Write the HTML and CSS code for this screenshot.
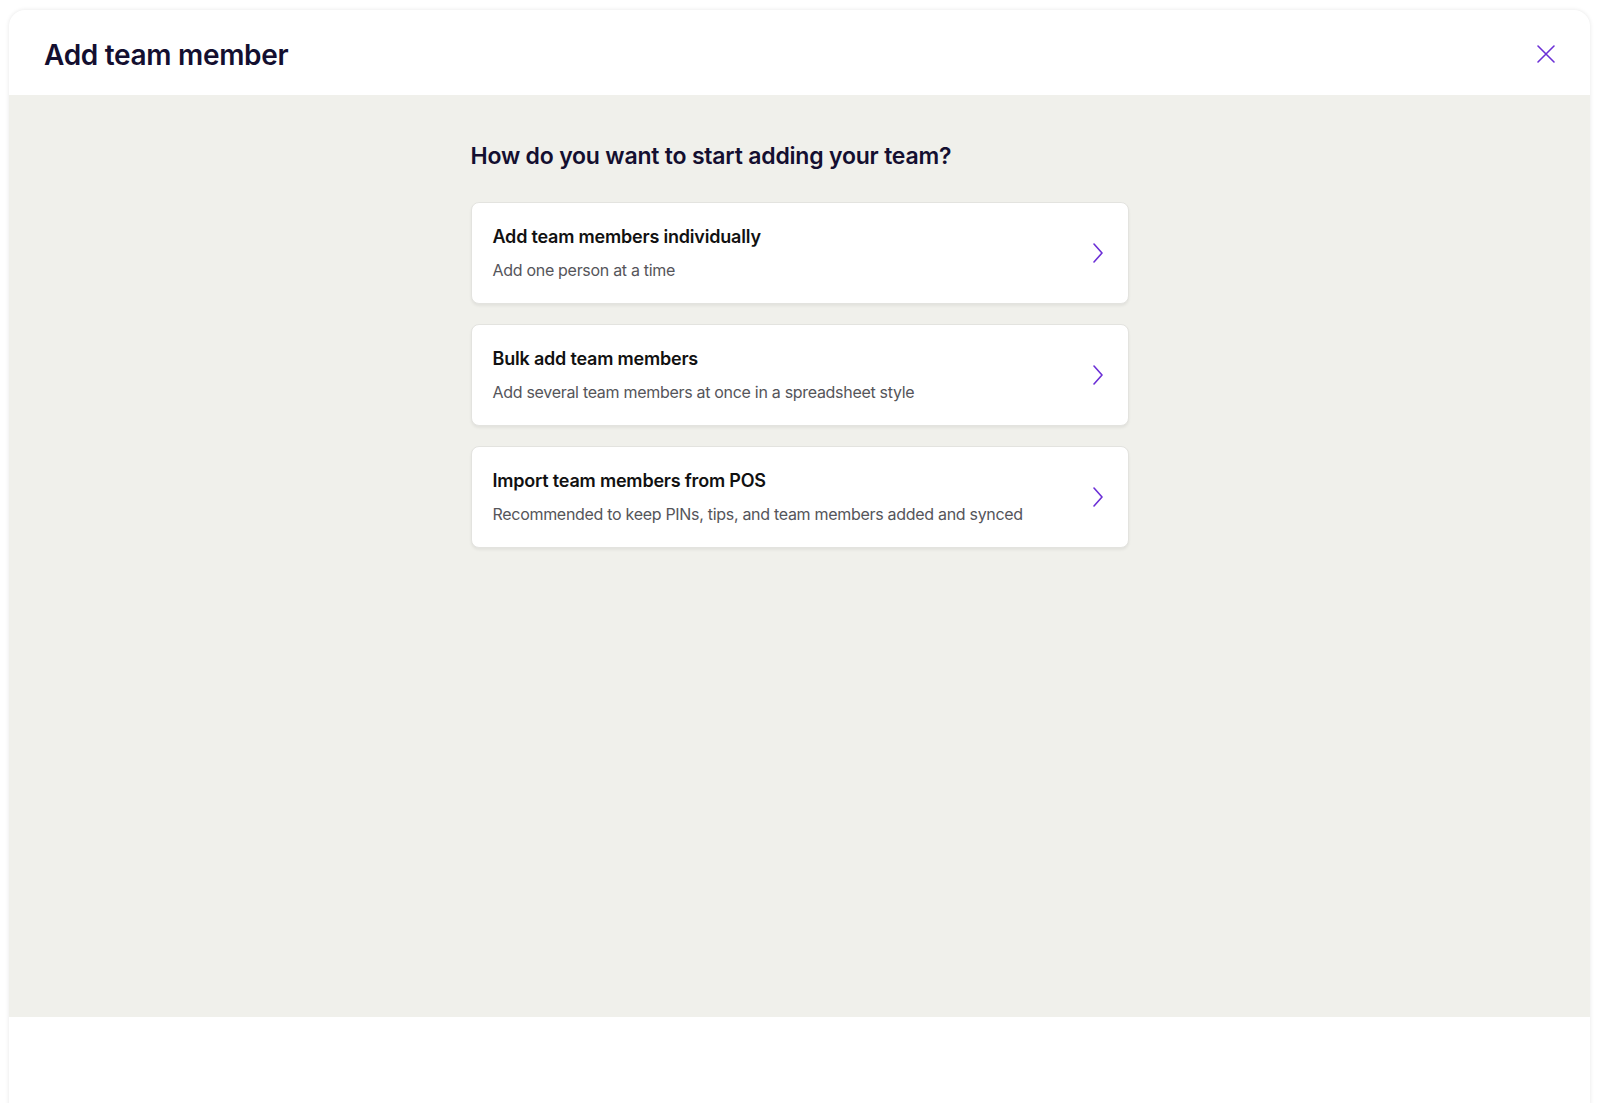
FILE: index.html
```html
<!DOCTYPE html>
<html lang="en">
<head>
	<meta charset="UTF-8">
	<title>Add team member</title>

	<link rel="stylesheet" href="styles.css">
</head>
<body>

<div class="modal">
	<div class="modal-head">
		<h1 class="modal-title">Add team member</h1>
		<button class="close" type="button" aria-label="Close">
			<svg width="20" height="20" viewBox="0 0 20 20" fill="none" stroke="currentColor" stroke-width="1.6" stroke-linecap="round">
				<path d="M2 2 L18 18 M18 2 L2 18"/>
			</svg>
		</button>
	</div>

	<div class="modal-body">
		<div class="choices">
			<h2 class="question">How do you want to start adding your team?</h2>

			<a class="choice" href="#">
				<div class="choice-text">
					<div class="choice-title">Add team members individually</div>
					<div class="choice-desc">Add one person at a time</div>
				</div>
				<svg class="chevron" width="12" height="20" viewBox="0 0 12 20" fill="none" stroke="currentColor" stroke-width="1.6" stroke-linecap="round" stroke-linejoin="round">
					<path d="M2 1 L10 10 L2 19"/>
				</svg>
			</a>

			<a class="choice" href="#">
				<div class="choice-text">
					<div class="choice-title">Bulk add team members</div>
					<div class="choice-desc">Add several team members at once in a spreadsheet style</div>
				</div>
				<svg class="chevron" width="12" height="20" viewBox="0 0 12 20" fill="none" stroke="currentColor" stroke-width="1.6" stroke-linecap="round" stroke-linejoin="round">
					<path d="M2 1 L10 10 L2 19"/>
				</svg>
			</a>

			<a class="choice" href="#">
				<div class="choice-text">
					<div class="choice-title">Import team members from POS</div>
					<div class="choice-desc">Recommended to keep PINs, tips, and team members added and synced</div>
				</div>
				<svg class="chevron" width="12" height="20" viewBox="0 0 12 20" fill="none" stroke="currentColor" stroke-width="1.6" stroke-linecap="round" stroke-linejoin="round">
					<path d="M2 1 L10 10 L2 19"/>
				</svg>
			</a>
		</div>
	</div>

	<div class="modal-foot"></div>
</div>

</body>
</html>
```

FILE: styles.css
```css
html, body {
	margin: 0;
	height: 100%;
	background: #fff;
	font-family: Inter, "Noto Sans", sans-serif;
	overflow: hidden;
}

.modal {
	margin: 10px 10px 0 9px;
	border-radius: 16px 16px 0 0;
	background: #fff;
	box-shadow: 0 0 4px rgba(0, 0, 0, 0.1);
	display: flex;
	flex-direction: column;
	overflow: hidden;
}

.modal-head {
	height: 85px;
	display: flex;
	align-items: center;
	justify-content: space-between;
	padding: 4px 34px 0 35px;
	box-sizing: border-box;
}

.modal-title {
	margin: 0;
	font-size: 28px;
	font-weight: 600;
	color: #140f30;
	letter-spacing: -0.3px;
}

.close {
	border: 0;
	background: none;
	padding: 0;
	color: #6b2fd6;
	display: flex;
	cursor: pointer;
	margin-bottom: 2px;
}

.modal-body {
	height: 922px;
	background: #f0f0eb;
	display: flex;
	justify-content: center;
	padding-top: 47px;
	box-sizing: border-box;
}

.choices {
	width: 658px;
	display: flex;
	flex-direction: column;
	gap: 20px;
}

.question {
	margin: 0 0 12px 0;
	font-size: 23px;
	line-height: 28px;
	font-weight: 600;
	color: #140f30;
	letter-spacing: -0.2px;
}

.choice {
	height: 102px;
	box-sizing: border-box;
	background: #fff;
	border: 1px solid #e3e3df;
	border-radius: 8px;
	box-shadow: 0 2px 3px rgba(0, 0, 0, 0.06);
	display: flex;
	align-items: center;
	justify-content: space-between;
	padding: 0 24px 0 21px;
	text-decoration: none;
}

.choice-text {
	display: flex;
	flex-direction: column;
	gap: 10px;
}

.choice-title {
	font-size: 18px;
	line-height: 24px;
	font-weight: 600;
	color: #111;
	letter-spacing: -0.2px;
}

.choice-desc {
	font-size: 16px;
	line-height: 22px;
	color: #55555a;
	letter-spacing: -0.3px;
}

.chevron {
	color: #6b2fd6;
}

.modal-foot {
	height: 120px;
	background: #fff;
}
```
